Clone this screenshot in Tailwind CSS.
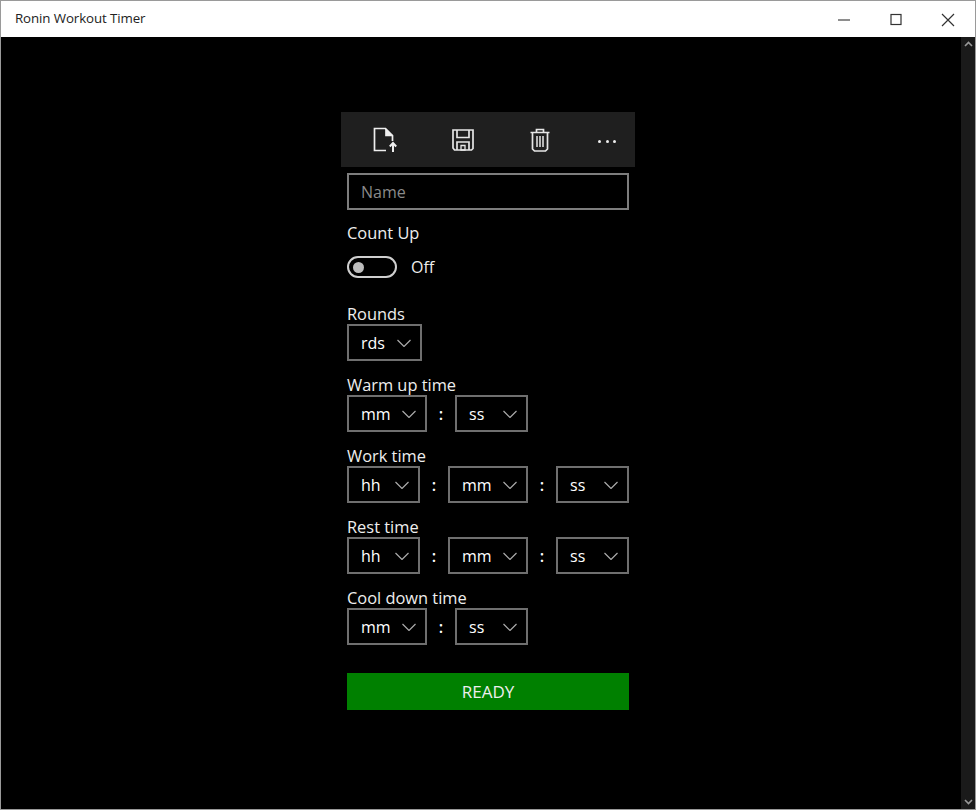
<!doctype html>
<html lang="en">
<head>
    <meta charset="utf-8">
    <title>Ronin Workout Timer</title>
    <script src="https://cdn.jsdelivr.net/npm/@tailwindcss/browser@4"></script>
</head>
<body class="bg-black font-['Open_Sans','Noto_Sans',sans-serif]">
<div class="w-[976px] h-[810px] flex flex-col border border-[#9a9a9a] overflow-hidden">
    <!-- title bar -->
    <header class="h-[36px] shrink-0 bg-white flex items-center justify-between text-[#222]">
        <span class="pl-[14px] text-[13.3px] tracking-[-0.1px]">Ronin Workout Timer</span>
        <div class="flex items-center">
            <svg class="w-[52px] h-[35px]" viewBox="0 0 52 35" fill="none" stroke="#444" stroke-width="1.2"><path d="M20 18h12"/></svg>
            <svg class="w-[52px] h-[35px]" viewBox="0 0 52 35" fill="none" stroke="#333" stroke-width="1.2"><rect x="21" y="12.5" width="10" height="10"/></svg>
            <svg class="w-[52px] h-[35px] mr-[1px]" viewBox="0 0 52 35" fill="none" stroke="#333" stroke-width="1.2"><path d="M20 12l12 12M32 12L20 24"/></svg>
        </div>
    </header>

    <div class="flex-1 flex min-h-0">
        <main class="flex-1 flex flex-col items-center pt-[75px] text-white text-[16px]">
            <!-- command bar -->
            <div class="w-[294px] h-[55px] bg-[#1f1f1f] flex items-center pl-[31px] ml-[14px]">
                <svg class="w-[26px] h-[26px]" viewBox="0 0 26 26" fill="none" stroke="#eee" stroke-width="1.7">
                    <path d="M14 23.500H2.500V1.500h11L20.500 8.500V14"/><path d="M14 2v6.500H20.500" fill="#eee"/><path d="M21 25v-9M17.800 19.500L21 16l3.200 3.500" stroke-width="2"/>
                </svg>
                <svg class="w-[24px] h-[24px] ml-[53px]" viewBox="0 0 24 24" fill="none" stroke="#e6e6e6" stroke-width="1.7">
                    <path d="M2 2h20v18.500l-1.500 1.500h-17L2 20z"/><path d="M6 2v7.500h12V2M6 22v-8h12v8"/><path d="M10 17.500h4v4.500h-4z" stroke-width="1.3"/>
                </svg>
                <svg class="w-[24px] h-[24px] ml-[53px]" viewBox="0 0 24 24" fill="none" stroke="#e6e6e6" stroke-width="1.7">
                    <path d="M2.500 4.500h19M8.500 4V1.500h7V4"/><path d="M4.500 5v16l2 2h11l2-2V5"/><path d="M9 8v11M12 8v11M15 8v11" stroke-width="2" stroke="#b5b5b5"/>
                </svg>
                <div class="w-[24px] ml-[43px] mt-[3px] flex justify-between px-[3px]">
                    <i class="w-[3px] h-[3px] rounded-full bg-[#eee]"></i>
                    <i class="w-[3px] h-[3px] rounded-full bg-[#eee]"></i>
                    <i class="w-[3px] h-[3px] rounded-full bg-[#eee]"></i>
                </div>
            </div>

            <div class="w-[282px] ml-[14px] flex flex-col">
                <div class="mt-[6px] h-[37px] border-2 border-[#7d7d7d] flex items-center pl-[12px] text-[#8a8a8a]">Name</div>

                <div class="mt-[11px] h-[24px] leading-[24px] text-[16.4px] text-[#eee]">Count Up</div>
                <div class="mt-[11px] h-[22px] flex items-center">
                    <div class="w-[50px] h-[22px] rounded-full border-2 border-[#cfcfcf] flex items-center pl-[4px]">
                        <div class="w-[11px] h-[11px] rounded-full bg-[#bdbdbd]"></div>
                    </div>
                    <span class="ml-[14px] text-[#eee]">Off</span>
                </div>

                <div class="mt-[25px] h-[22px] leading-[22px] text-[16.4px] text-[#eee]">Rounds</div>
                <div class="mt-[-1px] flex"><div class="w-[75px] h-[37px] border-2 border-[#6f6f6f] flex items-center justify-between pl-[12px] pr-[9px]"><span>rds</span><svg class="w-[14px] h-[8px]" viewBox="0 0 14 8" fill="none" stroke="#aaa" stroke-width="1.2"><path d="M.5 1l6.500 6.500L13.500 1"/></svg></div></div>

                <div class="mt-[13px] h-[22px] leading-[22px] text-[16.4px] text-[#eee]">Warm up time</div>
                <div class="mt-[-1px] flex items-center">
                    <div class="w-[80px] h-[37px] border-2 border-[#6f6f6f] flex items-center justify-between pl-[12px] pr-[9px]"><span>mm</span><svg class="w-[14px] h-[8px]" viewBox="0 0 14 8" fill="none" stroke="#aaa" stroke-width="1.2"><path d="M.5 1l6.500 6.500L13.500 1"/></svg></div>
                    <span class="w-[28px] text-center font-semibold">:</span>
                    <div class="w-[73px] h-[37px] border-2 border-[#6f6f6f] flex items-center justify-between pl-[12px] pr-[9px]"><span>ss</span><svg class="w-[14px] h-[8px]" viewBox="0 0 14 8" fill="none" stroke="#aaa" stroke-width="1.2"><path d="M.5 1l6.500 6.500L13.500 1"/></svg></div>
                </div>

                <div class="mt-[13px] h-[22px] leading-[22px] text-[16.4px] text-[#eee]">Work time</div>
                <div class="mt-[-1px] flex items-center">
                    <div class="w-[73px] h-[37px] border-2 border-[#6f6f6f] flex items-center justify-between pl-[12px] pr-[9px]"><span>hh</span><svg class="w-[14px] h-[8px]" viewBox="0 0 14 8" fill="none" stroke="#aaa" stroke-width="1.2"><path d="M.5 1l6.500 6.500L13.500 1"/></svg></div>
                    <span class="w-[28px] text-center font-semibold">:</span>
                    <div class="w-[80px] h-[37px] border-2 border-[#6f6f6f] flex items-center justify-between pl-[12px] pr-[9px]"><span>mm</span><svg class="w-[14px] h-[8px]" viewBox="0 0 14 8" fill="none" stroke="#aaa" stroke-width="1.2"><path d="M.5 1l6.500 6.500L13.500 1"/></svg></div>
                    <span class="w-[28px] text-center font-semibold">:</span>
                    <div class="w-[73px] h-[37px] border-2 border-[#6f6f6f] flex items-center justify-between pl-[12px] pr-[9px]"><span>ss</span><svg class="w-[14px] h-[8px]" viewBox="0 0 14 8" fill="none" stroke="#aaa" stroke-width="1.2"><path d="M.5 1l6.500 6.500L13.500 1"/></svg></div>
                </div>

                <div class="mt-[13px] h-[22px] leading-[22px] text-[16.4px] text-[#eee]">Rest time</div>
                <div class="mt-[-1px] flex items-center">
                    <div class="w-[73px] h-[37px] border-2 border-[#6f6f6f] flex items-center justify-between pl-[12px] pr-[9px]"><span>hh</span><svg class="w-[14px] h-[8px]" viewBox="0 0 14 8" fill="none" stroke="#aaa" stroke-width="1.2"><path d="M.5 1l6.500 6.500L13.500 1"/></svg></div>
                    <span class="w-[28px] text-center font-semibold">:</span>
                    <div class="w-[80px] h-[37px] border-2 border-[#6f6f6f] flex items-center justify-between pl-[12px] pr-[9px]"><span>mm</span><svg class="w-[14px] h-[8px]" viewBox="0 0 14 8" fill="none" stroke="#aaa" stroke-width="1.2"><path d="M.5 1l6.500 6.500L13.500 1"/></svg></div>
                    <span class="w-[28px] text-center font-semibold">:</span>
                    <div class="w-[73px] h-[37px] border-2 border-[#6f6f6f] flex items-center justify-between pl-[12px] pr-[9px]"><span>ss</span><svg class="w-[14px] h-[8px]" viewBox="0 0 14 8" fill="none" stroke="#aaa" stroke-width="1.2"><path d="M.5 1l6.500 6.500L13.500 1"/></svg></div>
                </div>

                <div class="mt-[13px] h-[22px] leading-[22px] text-[16.4px] text-[#eee]">Cool down time</div>
                <div class="mt-[-1px] flex items-center">
                    <div class="w-[80px] h-[37px] border-2 border-[#6f6f6f] flex items-center justify-between pl-[12px] pr-[9px]"><span>mm</span><svg class="w-[14px] h-[8px]" viewBox="0 0 14 8" fill="none" stroke="#aaa" stroke-width="1.2"><path d="M.5 1l6.500 6.500L13.500 1"/></svg></div>
                    <span class="w-[28px] text-center font-semibold">:</span>
                    <div class="w-[73px] h-[37px] border-2 border-[#6f6f6f] flex items-center justify-between pl-[12px] pr-[9px]"><span>ss</span><svg class="w-[14px] h-[8px]" viewBox="0 0 14 8" fill="none" stroke="#aaa" stroke-width="1.2"><path d="M.5 1l6.500 6.500L13.500 1"/></svg></div>
                </div>

                <div class="mt-[28px] h-[37px] bg-[#008000] flex items-center justify-center text-[17px] text-[#eee]">READY</div>
            </div>
        </main>

        <!-- scrollbar -->
        <aside class="w-[14px] shrink-0 bg-[#1a1a1a] flex flex-col justify-between items-center py-[4px]">
            <svg class="w-[9px] h-[6px]" viewBox="0 0 9 6" fill="none" stroke="#999" stroke-width="1.6"><path d="M1 5l3.500-3.500L8 5"/></svg>
            <svg class="w-[9px] h-[6px]" viewBox="0 0 9 6" fill="none" stroke="#999" stroke-width="1.6"><path d="M1 1l3.500 3.500L8 1"/></svg>
        </aside>
    </div>
</div>
</body>
</html>
